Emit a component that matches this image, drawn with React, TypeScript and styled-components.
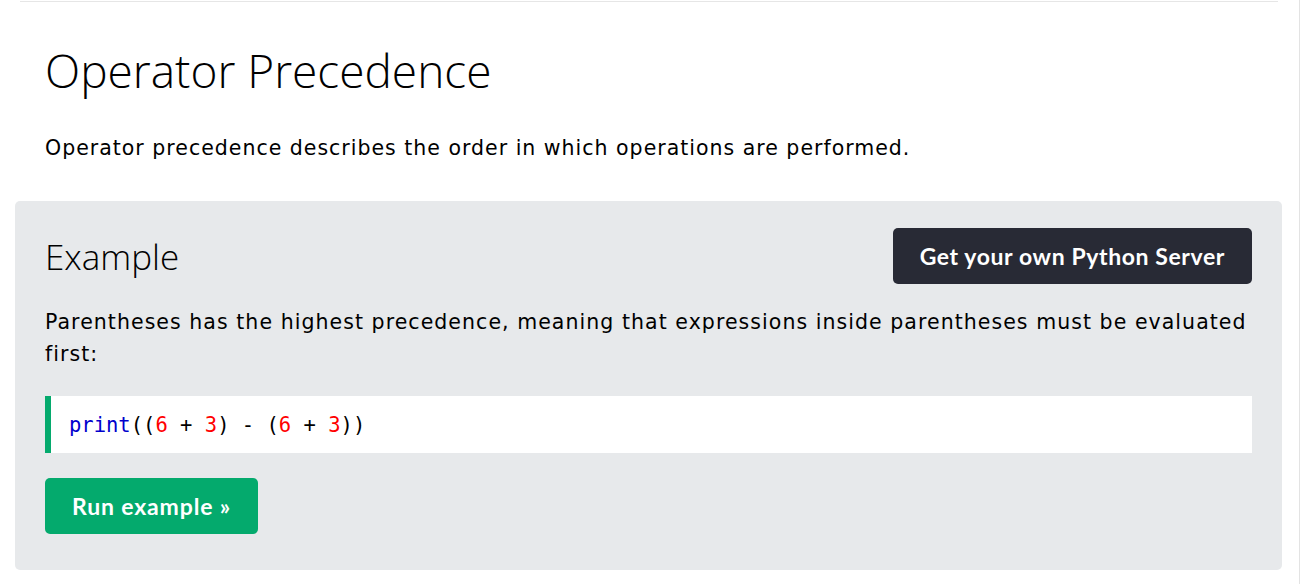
import React from "react";
import styled, { createGlobalStyle } from "styled-components";

const Global = createGlobalStyle`
  html, body { margin: 0; padding: 0; background: #fff; }
  body { font-family: "DejaVu Sans", Verdana, sans-serif; color: #000; }
`;

const Page = styled.div`
  width: 1300px;
  height: 584px;
  box-sizing: border-box;
  border-right: 1px solid #e3e3e3;
  overflow: hidden;
`;

const Main = styled.main`
  padding: 1px 17px 0 15px;
`;

const Rule = styled.hr`
  border: none;
  border-top: 1px solid #e6e6e6;
  margin: 0 4px 0 5px;
`;

const Title = styled.h1`
  font-family: "Open Sans", "Segoe UI", sans-serif;
  font-weight: 300;
  font-size: 46px;
  line-height: 1;
  margin: 45px 0 0 30px;
`;

const Lead = styled.p`
  font-size: 20.5px;
  letter-spacing: 1px;
  line-height: 32px;
  margin: 39px 0 0 30px;
`;

const ExampleBox = styled.section`
  background: #e7e9eb;
  border-radius: 5px;
  margin-top: 37px;
  padding: 27px 30px 36px;
`;

const Head = styled.div`
  display: flex;
  justify-content: space-between;
  align-items: center;
`;

const SubTitle = styled.h2`
  font-family: "Open Sans", "Segoe UI", sans-serif;
  font-weight: 300;
  font-size: 35px;
  margin: 0;
`;

const Btn = styled.a<{ $tone: "dark" | "green" }>`
  display: inline-flex;
  align-items: center;
  justify-content: center;
  box-sizing: border-box;
  height: 56px;
  padding: 0 27px;
  border-radius: 5px;
  background: ${(p) => (p.$tone === "dark" ? "#282a35" : "#04aa6d")};
  color: #fff;
  font-family: "Lato", "Source Sans Pro", sans-serif;
  font-weight: 700;
  font-size: 23px;
  letter-spacing: ${(p) => (p.$tone === "dark" ? "0.6px" : "0.85px")};
  text-decoration: none;
`;

const Text = styled.p`
  font-size: 20.5px;
  letter-spacing: 1.05px;
  line-height: 32px;
  margin: 22px 0 0;
`;

const Code = styled.div`
  background: #fff;
  border-left: 6px solid #04aa6d;
  margin-top: 26px;
  padding: 0 0 0 18px;
  height: 57px;
  display: flex;
  align-items: center;
  font-family: "DejaVu Sans Mono", "Liberation Mono", monospace;
  font-size: 20.5px;
  white-space: pre;
`;

const Kw = styled.span`
  color: #0000cd;
`;
const Num = styled.span`
  color: #ff0000;
`;

const Actions = styled.div`
  margin-top: 25px;
`;

export default function App() {
  return (
    <Page>
      <Global />
      <Main>
        <Rule />
        <Title>Operator Precedence</Title>
        <Lead>Operator precedence describes the order in which operations are performed.</Lead>
        <ExampleBox>
          <Head>
            <SubTitle>Example</SubTitle>
            <Btn $tone="dark">Get your own Python Server</Btn>
          </Head>
          <Text>
            Parentheses has the highest precedence, meaning that expressions inside parentheses must be evaluated
            first:
          </Text>
          <Code>
            <Kw>print</Kw>((<Num>6</Num> + <Num>3</Num>) - (<Num>6</Num> + <Num>3</Num>))
          </Code>
          <Actions>
            <Btn $tone="green">Run example »</Btn>
          </Actions>
        </ExampleBox>
      </Main>
    </Page>
  );
}
